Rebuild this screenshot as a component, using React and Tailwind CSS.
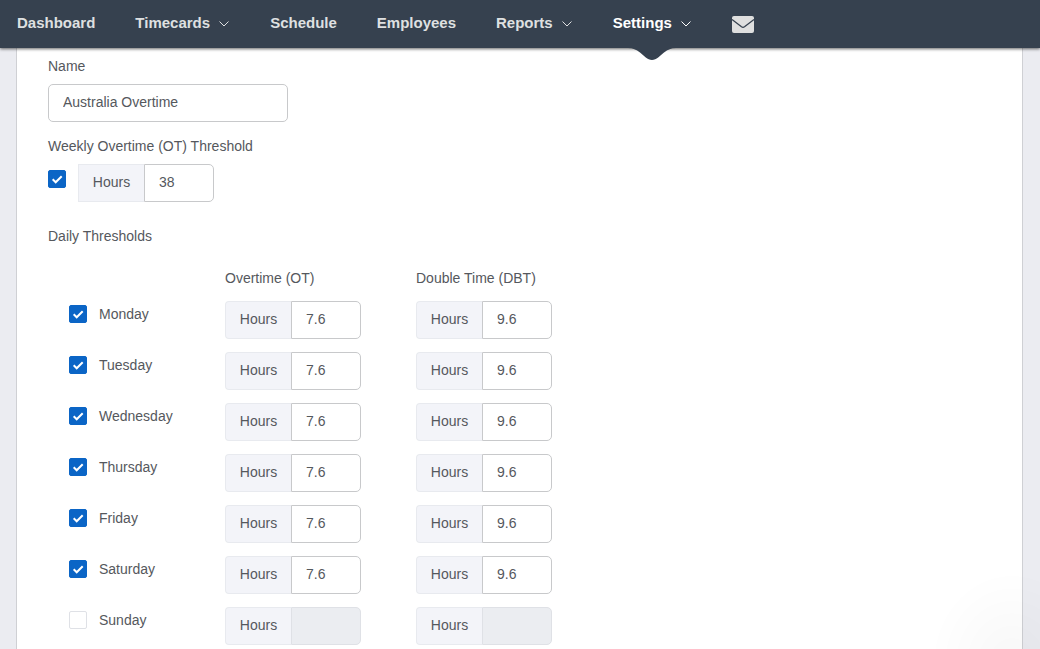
import { useState } from 'react';

const NAV = [
  { label: 'Dashboard' },
  { label: 'Timecards', menu: true },
  { label: 'Schedule' },
  { label: 'Employees' },
  { label: 'Reports', menu: true },
  { label: 'Settings', menu: true, active: true },
];

const DAYS = [
  { name: 'Monday', on: true, ot: '7.6', dbt: '9.6' },
  { name: 'Tuesday', on: true, ot: '7.6', dbt: '9.6' },
  { name: 'Wednesday', on: true, ot: '7.6', dbt: '9.6' },
  { name: 'Thursday', on: true, ot: '7.6', dbt: '9.6' },
  { name: 'Friday', on: true, ot: '7.6', dbt: '9.6' },
  { name: 'Saturday', on: true, ot: '7.6', dbt: '9.6' },
  { name: 'Sunday', on: false, ot: '', dbt: '' },
];

function NavItem({ label, menu, active }) {
  const color = active ? 'text-white' : 'text-[#dfe0e1]';
  return (
    <li className="relative flex h-12 items-center">
      <a href="#" className={`flex items-center gap-2 pb-0.5 text-[15px] leading-5 font-bold ${color}`}>
        {label}
        {menu && (
          <svg className="mt-0.5 size-3" viewBox="0 0 12 12" fill="none" stroke="currentColor" aria-hidden="true">
            <path d="M1.5 3.5 6 8l4.5-4.5" />
          </svg>
        )}
      </a>
      {active && (
        <svg
          className="absolute top-full left-1/2 h-3 w-12 -translate-x-1/2 text-[#36414f]"
          viewBox="0 0 48 12"
          fill="currentColor"
          aria-hidden="true"
        >
          <path d="M0 0h48c-5 0-8 1.500-12 4.500S28.500 12 24 12s-8-4.500-12-7.500S5 0 0 0z" />
        </svg>
      )}
    </li>
  );
}

function Checkbox(props) {
  return (
    <span className="grid size-[18px] shrink-0">
      <input
        type="checkbox"
        className="peer col-start-1 row-start-1 size-[18px] appearance-none rounded-xs border border-[#dfe1e6] bg-white checked:border-[#0b65c6] checked:bg-[#0b65c6]"
        {...props}
      />
      <svg
        className="pointer-events-none invisible col-start-1 row-start-1 size-[18px] peer-checked:visible"
        viewBox="0 0 18 18"
        fill="none"
        stroke="white"
        strokeWidth="2"
        aria-hidden="true"
      >
        <path d="M4.700 9.300 7.700 12.300 13.700 6.300" />
      </svg>
    </span>
  );
}

function HoursInput({ id, name, value, disabled, square }) {
  return (
    <div className="flex h-[38px]">
      <label
        htmlFor={id}
        className={`flex w-[66px] items-center justify-center border border-r-0 border-[#e8eaef] bg-[#f3f4f9] pb-0.5 ${square ? '' : 'rounded-l-sm'}`}
      >
        Hours
      </label>
      <input
        id={id}
        type="text"
        aria-label={`${name} hours`}
        defaultValue={value}
        disabled={disabled}
        className="w-[70px] rounded-r-[5px] border border-[#c8c9cb] bg-white px-3.5 pb-0.5 disabled:border-[#dfe1e6] disabled:bg-[#ebedf1]"
      />
    </div>
  );
}

export default function App() {
  const [weekly, setWeekly] = useState(true);
  const [enabled, setEnabled] = useState(DAYS.map((d) => d.on));

  const toggle = (i) => setEnabled(enabled.map((on, j) => (j === i ? !on : on)));

  return (
    <div className="flex min-h-screen flex-col bg-[#ebecf1] font-['Liberation_Sans',Arial,sans-serif] text-sm leading-5 text-[#55585d]">
      <header className="sticky top-0 z-10 bg-[#36414f] shadow-[0_1px_3px_rgba(0,0,0,0.6)]">
        <nav>
          <ul className="flex items-center gap-10 px-[17px]">
            {NAV.map((item) => (
              <NavItem key={item.label} {...item} />
            ))}
            <li>
              <a href="#" aria-label="Messages" className="block text-[#dfdfdf]">
                <svg className="h-[17px] w-[22px]" viewBox="0 0 22 17" fill="currentColor" aria-hidden="true">
                  <rect width="22" height="17" rx="2" />
                  <path d="M0 3.500 9.500 10.800q1.500 1 3 0L22 3.500" fill="none" stroke="#36414f" strokeWidth="1.300" />
                </svg>
              </a>
            </li>
          </ul>
        </nav>
      </header>

      <main className="mr-[17px] ml-4 grow border-x border-[#cfd0d4] bg-white px-[31px] pt-2">
        <form>
          <label htmlFor="name" className="block">
            Name
          </label>
          <input
            id="name"
            type="text"
            defaultValue="Australia Overtime"
            className="mt-2 block h-[38px] w-60 rounded-[5px] border border-[#c8c9cb] px-3.5 pb-0.5"
          />

          <label htmlFor="weekly" className="mt-3.5 block">
            Weekly Overtime (OT) Threshold
          </label>
          <div className="mt-2 flex gap-3">
            <div className="pt-1.5">
              <Checkbox id="weekly" checked={weekly} onChange={() => setWeekly(!weekly)} />
            </div>
            <HoursInput id="weekly-hours" name="Weekly overtime" value="38" disabled={!weekly} square />
          </div>

          <h2 className="mt-6">Daily Thresholds</h2>
          <table className="mt-[22px] text-left">
            <thead>
              <tr>
                <td className="w-[177px] p-0" />
                <th className="w-[191px] p-0 font-normal">Overtime (OT)</th>
                <th className="p-0 font-normal">Double Time (DBT)</th>
              </tr>
            </thead>
            <tbody>
              {DAYS.map((day, i) => (
                <tr key={day.name} className="align-top">
                  <th className="pt-[17px] pl-[21px] font-normal">
                    <label className="flex h-[18px] w-fit items-center gap-3">
                      <Checkbox checked={enabled[i]} onChange={() => toggle(i)} />
                      {day.name}
                    </label>
                  </th>
                  <td className="pt-[13px]">
                    <HoursInput id={`ot-${i}`} name={`${day.name} overtime`} value={day.ot} disabled={!enabled[i]} />
                  </td>
                  <td className="pt-[13px]">
                    <HoursInput id={`dbt-${i}`} name={`${day.name} double time`} value={day.dbt} disabled={!enabled[i]} />
                  </td>
                </tr>
              ))}
            </tbody>
          </table>
        </form>
      </main>

      {/* soft shade in the bottom corner */}
      <div className="pointer-events-none fixed right-0 bottom-0 h-20 w-28 bg-radial-[at_75%_120%] from-black/3 to-transparent to-70%" />
    </div>
  );
}
